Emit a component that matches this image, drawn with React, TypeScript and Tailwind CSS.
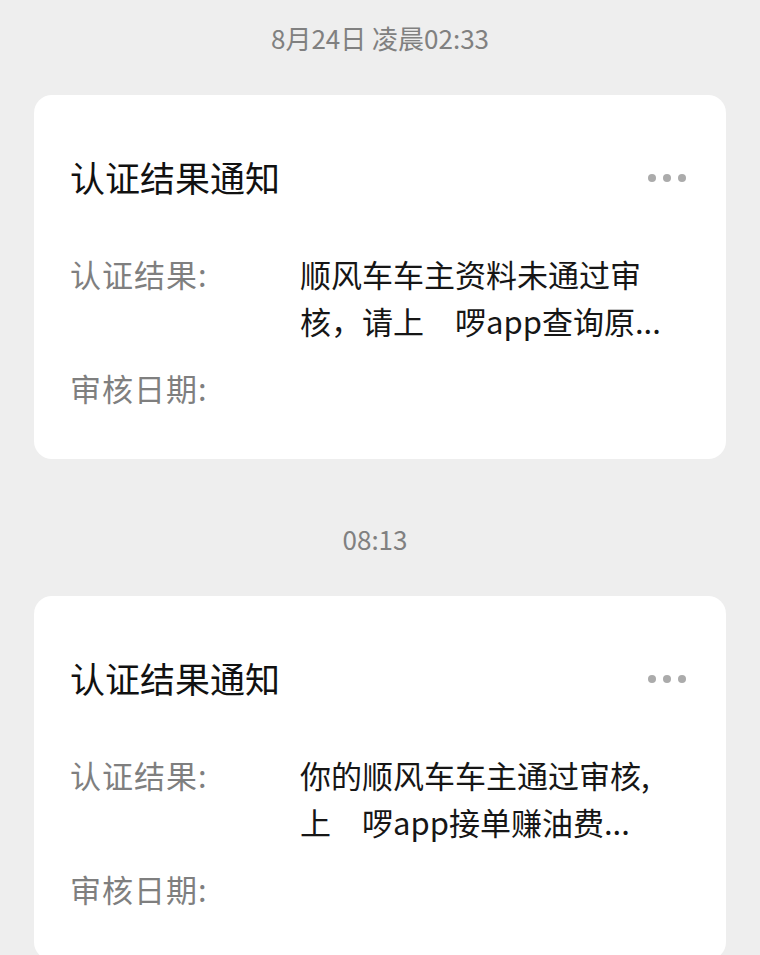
const font = {
  fontFamily: '"Noto Sans CJK SC", "Noto Sans", sans-serif',
};

interface Notice {
  time: string;
  lines: string[];
}

const notices: Notice[] = [
  {
    time: "8月24日 凌晨02:33",
    lines: ["顺风车车主资料未通过审", "核，请上　啰app查询原..."],
  },
  {
    time: "08:13",
    lines: ["你的顺风车车主通过审核,", "上　啰app接单赚油费..."],
  },
];

const NoticeCard = ({ notice, first }: { notice: Notice; first: boolean }) => {
  return (
    <div>
      {/* 时间 */}
      <p
        className={`text-center text-[26px] leading-[32px] text-[#808080] mb-[41px] ${
          first ? "pt-[22px]" : "mt-[64px] pr-[10px]"
        }`}
      >
        {notice.time}
      </p>
      {/* 卡片 */}
      <div className="mx-[34px] bg-white rounded-[18px] pl-[36px] pr-[40px] pt-[58px] pb-[48px]">
        <div className="flex justify-between items-center">
          <p className="text-[35px] leading-[48px] text-[#111111]">认证结果通知</p>
          <div className="flex gap-[7px] pt-[2px]">
            <span className="w-[8px] h-[8px] rounded-full bg-[#ababab]" />
            <span className="w-[8px] h-[8px] rounded-full bg-[#ababab]" />
            <span className="w-[8px] h-[8px] rounded-full bg-[#ababab]" />
          </div>
        </div>
        <div className="flex mt-[49px]">
          <p className="w-[230px] shrink-0 text-[31px] tracking-[1px] leading-[47px] text-[#7f7f7f]">
            认证结果:
          </p>
          <div className="text-[31px] leading-[47px] text-[#161616] whitespace-nowrap">
            {notice.lines.map((line) => (
              <p key={line}>{line}</p>
            ))}
          </div>
        </div>
        <p className="mt-[20px] text-[31px] tracking-[1px] leading-[47px] text-[#7f7f7f]">
          审核日期:
        </p>
      </div>
    </div>
  );
};

export default function App() {
  return (
    <div className="w-[760px] h-[955px] overflow-hidden bg-[#eeeeee]" style={font}>
      {notices.map((n, i) => (
        <NoticeCard key={n.time} notice={n} first={i === 0} />
      ))}
    </div>
  );
}
